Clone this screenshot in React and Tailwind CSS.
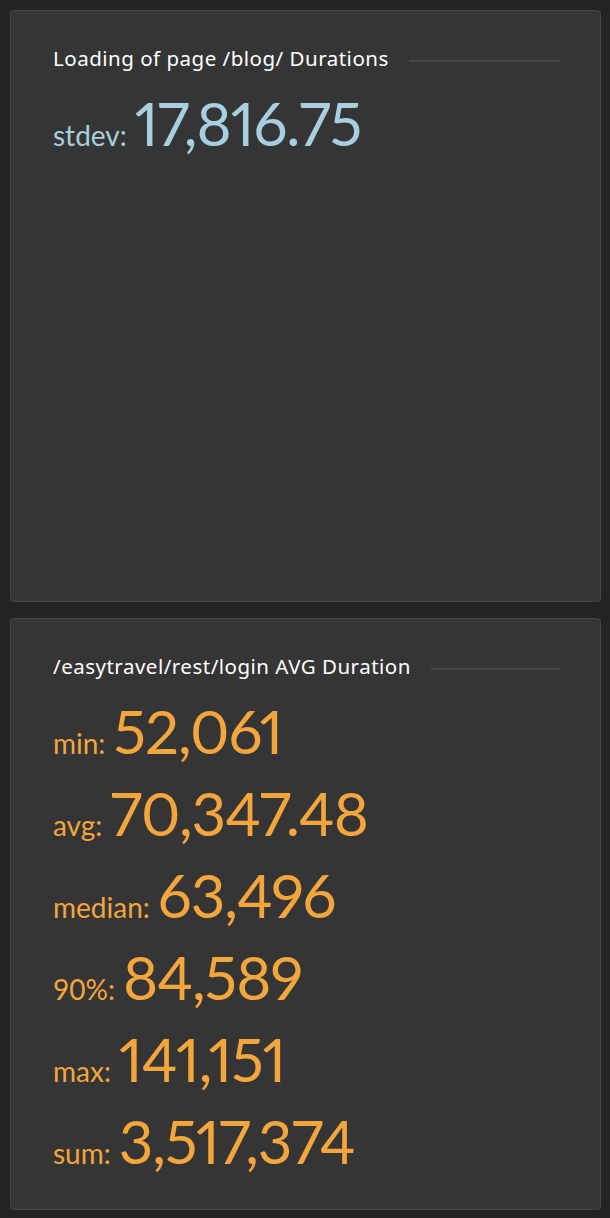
import React from "react";

function Title({ children }) {
  return (
    <div className="flex items-center gap-5">
      <div className="text-[20.5px] leading-[24px] font-normal tracking-[0.5px] text-white whitespace-nowrap" style={{ fontFamily: "'Noto Sans', sans-serif" }}>{children}</div>
      <div className="flex-1 h-[2px] bg-[#474747] mt-[6px]" />
    </div>
  );
}

function Row({ label, value, color }) {
  return (
    <div className={`flex items-baseline gap-[8px] h-[82px] leading-[82px] ${color}`}>
      <span className="text-[28px]">{label}</span>
      <span className="text-[60px] tracking-[-1px] proportional-nums">{value}</span>
    </div>
  );
}

export default function App() {
  const rows = [
    ["min:", "52,061"],
    ["avg:", "70,347.48"],
    ["median:", "63,496"],
    ["90%:", "84,589"],
    ["max:", "141,151"],
    ["sum:", "3,517,374"],
  ];
  return (
    <div className="w-[610px] h-[1218px] bg-[#232323] pt-[10px] pl-[10px] pr-[9px] flex flex-col gap-[16px]" style={{ fontFamily: "Lato, 'Noto Sans', sans-serif" }}>
      <div className="h-[592px] bg-[#353535] border border-[#464646] rounded-[4px] pt-[35px] pl-[42px] pr-[40px]">
        <Title>Loading of page /blog/ Durations</Title>
        <div className="mt-[12px]">
          <Row label="stdev:" value="17,816.75" color="text-[#a8cfdf]" />
        </div>
      </div>
      <div className="h-[592px] bg-[#353535] border border-[#464646] rounded-[4px] pt-[35px] pl-[42px] pr-[40px]">
        <Title>/easytravel/rest/login AVG Duration</Title>
        <div className="mt-[12px] flex flex-col">
          {rows.map(([l, v]) => (
            <Row key={l} label={l} value={v} color="text-[#f2a63b]" />
          ))}
        </div>
      </div>
    </div>
  );
}
